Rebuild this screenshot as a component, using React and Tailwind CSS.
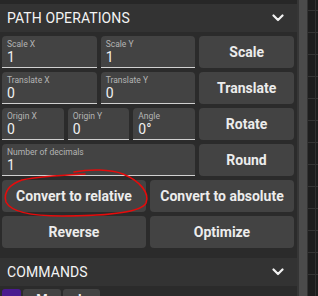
const Chevron = () => (
  <svg width="12" height="8" viewBox="0 0 12 8" fill="none">
    <polyline points="1.5,1.5 6,6 10.5,1.5" stroke="#f2f2f2" strokeWidth="2.2" strokeLinecap="round" strokeLinejoin="round" />
  </svg>
);

const Field = ({ label, value }) => (
  <div className="flex flex-col h-[32px] px-[5px] pt-[3px] bg-[#434343] rounded-t-[4px] border-b border-[#d0d0d0] overflow-hidden">
    <span className="text-[8.5px] leading-[10px] text-[#b4b4b4]">{label}</span>
    <span className="text-[14px] leading-[16px] text-[#f0f0f0]">{value}</span>
  </div>
);

const Btn = ({ children }) => (
  <button className="h-[32px] rounded-[4px] bg-[#434343] text-[14px] font-bold text-[#ececec] flex items-center justify-center">
    {children}
  </button>
);

const Header = ({ title }) => (
  <div className="h-[28px] shrink-0 bg-[#333333] flex items-center justify-between pl-[7px] pr-[13px]">
    <span className="text-[14px] text-[#f4f4f4] tracking-[0.1px]">{title}</span>
    <Chevron />
  </div>
);

export default function App() {
  return (
    <div className="relative w-[318px] h-[296px] flex overflow-hidden bg-[#1e1e1e] font-['Roboto',sans-serif]">
      <div className="w-[297px] shrink-0 flex flex-col bg-[#2b2b2b]">
        <div className="h-[4px] shrink-0 bg-[#272727]" />
        <Header title="PATH OPERATIONS" />

        <div className="flex flex-col gap-[4px] pl-[2px] pr-[3px] pt-[4px] pb-[10px]">
          <div className="grid grid-cols-3 gap-[4px]">
            <Field label="Scale X" value="1" />
            <Field label="Scale Y" value="1" />
            <Btn>Scale</Btn>
          </div>
          <div className="grid grid-cols-3 gap-[4px]">
            <Field label="Translate X" value="0" />
            <Field label="Translate Y" value="0" />
            <Btn>Translate</Btn>
          </div>
          <div className="grid grid-cols-[193px_1fr] gap-[4px]">
            <div className="grid grid-cols-3 gap-[4px]">
              <Field label="Origin X" value="0" />
              <Field label="Origin Y" value="0" />
              <Field label="Angle" value="0°" />
            </div>
            <Btn>Rotate</Btn>
          </div>
          <div className="grid grid-cols-[193px_1fr] gap-[4px]">
            <Field label="Number of decimals" value="1" />
            <Btn>Round</Btn>
          </div>
          <div className="grid grid-cols-2 gap-[4px]">
            <Btn>Convert to relative</Btn>
            <Btn>Convert to absolute</Btn>
          </div>
          <div className="grid grid-cols-2 gap-[4px]">
            <Btn>Reverse</Btn>
            <Btn>Optimize</Btn>
          </div>
        </div>

        <Header title="COMMANDS" />
        <div className="flex gap-[2px] pl-[2px] pt-[3px]">
          <div className="w-[19px] h-[20px] rounded-t-[3px] bg-[#4a1a8f]" />
          <div className="w-[38px] h-[20px] rounded-t-[3px] bg-[#434343] text-[13px] font-bold text-[#eee] text-center leading-[20px]">M</div>
          <div className="w-[37px] h-[20px] rounded-t-[3px] bg-[#434343] text-[13px] font-bold text-[#eee] text-center leading-[20px]">L</div>
        </div>
      </div>

      <div className="w-[2px] shrink-0 bg-[#363636]" />
      <div className="w-[8px] shrink-0 bg-[#4b4b4b]" />
      <div className="w-[1px] shrink-0 bg-[#333333]" />
      <div className="flex-1 bg-[#1d1d1d] bg-[linear-gradient(#343434_1px,transparent_1px)] bg-[length:100%_22px] bg-[position:0_10px]">
        <div className="w-[8px] h-full border-r border-[#303030]" />
      </div>

      <svg className="absolute inset-0 pointer-events-none" width="318" height="296" viewBox="0 0 318 296" fill="none">
        <path
          d="M74,172 C90,169 110,169 123,174 C140,181 150,193 146,203 C141,213 100,216 62,216 C32,216 11,212 6,202 C3,192 10,184 22,180 C40,176 65,175 85,174"
          stroke="#e50b0b"
          strokeWidth="1.6"
          strokeLinecap="round"
        />
      </svg>
    </div>
  );
}
